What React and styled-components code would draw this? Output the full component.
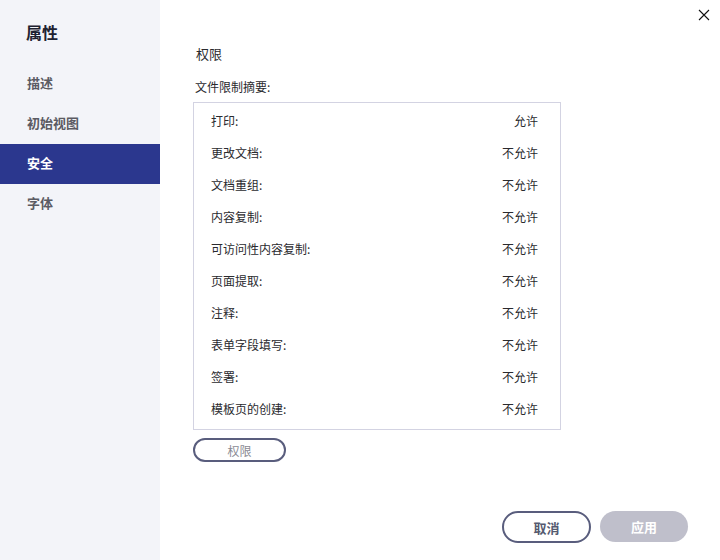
import React, { useState } from 'react'
import styled, { createGlobalStyle } from 'styled-components'

const Global = createGlobalStyle`
  html, body { margin: 0; padding: 0; background: #fff; }
  body { font-family: "Noto Sans CJK SC", "Liberation Sans", sans-serif; }
`

const Window = styled.div`
  width: 720px;
  height: 560px;
  display: flex;
  background: #fff;
  position: relative;
  overflow: hidden;
`

const Side = styled.div`
  width: 160px;
  background: #f3f4f9;
  display: flex;
  flex-direction: column;
`

const SideTitle = styled.div`
  font-size: 16px;
  font-weight: 700;
  color: #1e2231;
  padding: 20px 0 0 26px;
  height: 64px;
  box-sizing: border-box;
  line-height: 24px;
`

const NavItem = styled.div`
  height: 40px;
  box-sizing: border-box;
  display: flex;
  align-items: center;
  padding: 0 0 3px 27px;
  font-size: 13px;
  font-weight: 700;
  color: ${p => (p.active ? '#fff' : '#5b5b63')};
  background: ${p => (p.active ? '#2b378e' : 'transparent')};
  cursor: pointer;
`

const Main = styled.div`
  flex: 1;
  padding: 42px 0 0 33px;
  display: flex;
  flex-direction: column;
`

const Heading = styled.div`
  font-size: 13px;
  color: #2a2a2e;
  line-height: 24px;
  padding-left: 3px;
`

const Caption = styled.div`
  font-size: 12px;
  color: #2a2a2e;
  line-height: 20px;
  margin-top: 11px;
  padding-left: 2px;
`

const Box = styled.div`
  width: 366px;
  border: 1px solid #d3d3e2;
  margin-top: 5px;
  padding: 1px 0 5px;
`

const Row = styled.div`
  height: 32px;
  display: flex;
  align-items: center;
  justify-content: space-between;
  padding: 0 22px 0 17px;
  font-size: 12px;
  color: #2a2a2e;
`

const OutlineBtn = styled.button`
  width: ${p => p.w}px;
  height: ${p => p.h}px;
  border: 2px solid #595d7d;
  border-radius: 999px;
  background: #fff;
  font-family: inherit;
  font-size: ${p => (p.bold ? 13 : 12)}px;
  font-weight: ${p => (p.bold ? 700 : 400)};
  color: ${p => (p.bold ? '#555a70' : '#8a8a94')};
  padding: 0;
  cursor: pointer;
`

const PermBtn = styled(OutlineBtn)`
  margin-top: 8px;
`

const Footer = styled.div`
  margin-top: auto;
  display: flex;
  justify-content: flex-end;
  gap: 9px;
  padding: 0 32px 17px 0;
`

const FillBtn = styled.button`
  width: 88px;
  height: 31px;
  border: none;
  border-radius: 999px;
  background: #bfbfcb;
  color: #fff;
  font-family: inherit;
  font-size: 13px;
  font-weight: 700;
  padding: 0;
`

const Close = styled.button`
  position: absolute;
  top: 8px;
  right: 9px;
  width: 14px;
  height: 14px;
  border: none;
  background: none;
  padding: 0;
  cursor: pointer;
`

const nav = ['描述', '初始视图', '安全', '字体']
const rows = [
  ['打印:', '允许'],
  ['更改文档:', '不允许'],
  ['文档重组:', '不允许'],
  ['内容复制:', '不允许'],
  ['可访问性内容复制:', '不允许'],
  ['页面提取:', '不允许'],
  ['注释:', '不允许'],
  ['表单字段填写:', '不允许'],
  ['签署:', '不允许'],
  ['模板页的创建:', '不允许'],
]

export default function App() {
  const [active, setActive] = useState('安全')
  return (
    <>
      <Global />
      <Window>
        <Side>
          <SideTitle>属性</SideTitle>
          {nav.map(n => (
            <NavItem key={n} active={n === active} onClick={() => setActive(n)}>
              {n}
            </NavItem>
          ))}
        </Side>
        <Main>
          <Heading>权限</Heading>
          <Caption>文件限制摘要:</Caption>
          <Box>
            {rows.map(([k, v]) => (
              <Row key={k}>
                <span>{k}</span>
                <span>{v}</span>
              </Row>
            ))}
          </Box>
          <PermBtn w={93} h={24}>权限</PermBtn>
          <Footer>
            <OutlineBtn w={89} h={32} bold>取消</OutlineBtn>
            <FillBtn>应用</FillBtn>
          </Footer>
        </Main>
        <Close aria-label="关闭">
          <svg width="14" height="14" viewBox="0 0 14 14">
            <path d="M2 2 L12 12 M12 2 L2 12" stroke="#111" strokeWidth="1.1" fill="none" />
          </svg>
        </Close>
      </Window>
    </>
  )
}
